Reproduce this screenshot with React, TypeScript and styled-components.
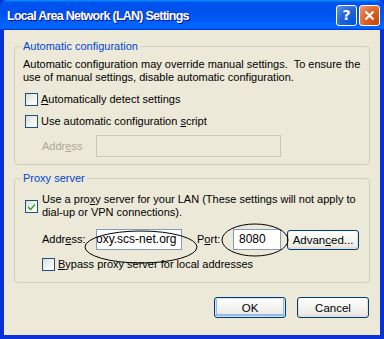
import React, { FC, ReactNode } from 'react'
import styled, { createGlobalStyle } from 'styled-components'

const GlobalStyle = createGlobalStyle`
    body {
        margin: 0px;
        background: #ffffff;
        font-family: "Liberation Sans", Arial, sans-serif;
        font-size: 11px;
    }
`

const Window = styled.div`
    width: 384px;
    height: 339px;
    display: flex;
    flex-direction: column;
    background: #0831d9;
    overflow: hidden;
    position: relative;
`

const TitleBar = styled.div`
    height: 30px;
    display: flex;
    align-items: center;
    padding: 0 4px 0 7px;
    border-radius: 7px 7px 0 0;
    background: linear-gradient(180deg, #0997ff 0%, #0053ee 8%, #0050ee 40%, #0066ff 88%, #0066ff 93%, #005bff 95%, #003dd7 96%, #003dd7 100%);
`

const Title = styled.div`
    flex: 1;
    color: #ffffff;
    font-family: "Liberation Sans", Arial, sans-serif;
    font-weight: bold;
    font-size: 12.5px;
    letter-spacing: -0.75px;
    text-shadow: 1px 1px #0f1089;
    margin-top: 1px;
`

const CaptionButton = styled.div<{ $close?: boolean }>`
    width: 19px;
    height: 19px;
    margin-left: 2px;
    border: 1px solid #ffffff;
    border-radius: 3px;
    display: flex;
    align-items: center;
    justify-content: center;
    color: #ffffff;
    font-family: "DejaVu Sans", sans-serif;
    font-weight: bold;
    font-size: 14px;
    background: ${p => p.$close
        ? 'radial-gradient(circle at 90% 90%, #cc4600 0%, #dc6527 55%, #f09b7c 100%)'
        : 'radial-gradient(circle at 90% 90%, #0054e9 0%, #2263d5 55%, #6696eb 100%)'};
`

const Body = styled.div`
    flex: 1;
    margin: 0 4px 4px 4px;
    background: #ece9d8;
    padding: 0 10px;
    display: flex;
    flex-direction: column;
    color: #000000;
`

const Group = styled.fieldset<{ $top: number }>`
    margin: ${p => p.$top}px 0 0 0;
    padding: 0 8px 7px 8px;
    border: 1px solid #d0d0bf;
    border-radius: 4px;
    display: flex;
    flex-direction: column;
    min-width: 0;
`

const Legend = styled.legend`
    color: #0046d5;
    padding: 0 2px;
    margin-left: -2px;
    line-height: 13px;
`

const Desc = styled.div`
    margin-top: 5px;
    line-height: 13px;
`

const Row = styled.div<{ $h?: number; $indent?: number; $mt?: number }>`
    display: flex;
    align-items: center;
    height: ${p => p.$h ?? 22}px;
    margin-left: ${p => p.$indent ?? 2}px;
    margin-top: ${p => p.$mt ?? 0}px;
`

const Box = styled.div`
    width: 11px;
    height: 11px;
    border: 1px solid #1c5180;
    background: linear-gradient(135deg, #dcdcd7 0%, #f5f5f1 60%, #ffffff 100%);
    flex: none;
    display: flex;
    align-items: center;
    justify-content: center;
`

const CheckLabel = styled.div<{ $gap?: number }>`
    margin-left: ${p => p.$gap ?? 3}px;
    line-height: 13px;
`

const Label = styled.div<{ $disabled?: boolean; $w: number }>`
    width: ${p => p.$w}px;
    flex: none;
    color: ${p => (p.$disabled ? '#aca899' : '#000000')};
`

const TextBox = styled.div<{ $disabled?: boolean; $w: number; $h: number }>`
    width: ${p => p.$w}px;
    height: ${p => p.$h}px;
    box-sizing: border-box;
    border: 1px solid ${p => (p.$disabled ? '#c9c7ba' : '#7f9db9')};
    background: ${p => (p.$disabled ? '#ece9d8' : '#ffffff')};
    display: flex;
    align-items: center;
    padding-left: 5px;
    overflow: hidden;
    white-space: nowrap;
    flex: none;
`

const Scrolled = styled.span`
    margin-left: -6px;
    font-size: 12px;
`

const Value = styled.span`
    font-size: 12px;
`

const Button = styled.div<{ $default?: boolean; $w: number; $h: number }>`
    width: ${p => p.$w}px;
    height: ${p => p.$h}px;
    box-sizing: border-box;
    border: 1px solid #003c74;
    border-radius: 3px;
    background: linear-gradient(180deg, #ffffff 0%, #f6f6f2 40%, #ecebe6 85%, #d6d0c5 100%);
    box-shadow: ${p => (p.$default ? 'inset 0 0 0 1px #cee7ff, inset 0 -1px 0 2px #98b8ea' : 'inset 0 -1px 0 1px #e3e1d8')};
    display: flex;
    align-items: center;
    justify-content: center;
    flex: none;
    font-size: 11.5px;
`

const Footer = styled.div`
    display: flex;
    justify-content: flex-end;
    gap: 11px;
    margin-top: 14px;
    padding-right: 1px;
`

const Marks = styled.svg`
    position: absolute;
    left: 0;
    top: 0;
    pointer-events: none;
`

const Check: FC<{ checked?: boolean }> = ({ checked }) => (
    <Box>
        {checked && (
            <svg width="9" height="9" viewBox="0 0 9 9">
                <path d="M1 4 L3.5 6.5 L8 1.5 L8 3.5 L3.5 8.5 L1 6 Z" fill="#21a121" />
            </svg>
        )}
    </Box>
)

const U: FC<{ children: ReactNode }> = ({ children }) => <u>{children}</u>

const App: FC = () => {
    return (
        <Window>
            <GlobalStyle />
            <TitleBar>
                <Title>Local Area Network (LAN) Settings</Title>
                <CaptionButton>?</CaptionButton>
                <CaptionButton $close>
                    <svg width="11" height="11" viewBox="0 0 11 11">
                        <path d="M1.5 1.5 L9.5 9.5 M9.5 1.5 L1.5 9.5" stroke="#ffffff" strokeWidth="2.2" />
                    </svg>
                </CaptionButton>
            </TitleBar>
            <Body>
                <Group $top={10}>
                    <Legend>Automatic configuration</Legend>
                    <Desc>
                        Automatic configuration may override manual settings.&nbsp; To ensure the
                        <br />
                        use of manual settings, disable automatic configuration.
                    </Desc>
                    <Row $mt={4}>
                        <Check />
                        <CheckLabel><U>A</U>utomatically detect settings</CheckLabel>
                    </Row>
                    <Row>
                        <Check />
                        <CheckLabel>Use automatic configuration <U>s</U>cript</CheckLabel>
                    </Row>
                    <Row $h={22} $indent={19} $mt={3}>
                        <Label $disabled $w={54}>Addr<U>e</U>ss</Label>
                        <TextBox $disabled $w={185} $h={22} />
                    </Row>
                </Group>
                <Group $top={7}>
                    <Legend>Proxy server</Legend>
                    <Row $h={26} $mt={8}>
                        <Check checked />
                        <CheckLabel $gap={4}>
                            Use a pro<U>x</U>y server for your LAN (These settings will not apply to
                            <br />
                            dial-up or VPN connections).
                        </CheckLabel>
                    </Row>
                    <Row $h={22} $indent={19} $mt={9}>
                        <Label $w={54}>Addr<U>e</U>ss:</Label>
                        <TextBox $w={86} $h={21}>
                            <Scrolled>oxy.scs-net.org</Scrolled>
                        </TextBox>
                        <Label $w={36} style={{ marginLeft: 15 }}>P<U>o</U>rt:</Label>
                        <TextBox $w={48} $h={21}>
                            <Value>8080</Value>
                        </TextBox>
                        <Button $w={72} $h={20} style={{ marginLeft: 6, marginTop: 2 }}>
                            Advan<U>c</U>ed...
                        </Button>
                    </Row>
                    <Row $h={22} $indent={19} $mt={3}>
                        <Check />
                        <CheckLabel $gap={3}><U>B</U>ypass proxy server for local addresses</CheckLabel>
                    </Row>
                </Group>
                <Footer>
                    <Button $default $w={72} $h={21}>OK</Button>
                    <Button $w={72} $h={21}>Cancel</Button>
                </Footer>
            </Body>
            <Marks width="384" height="339">
                <ellipse cx="141" cy="247" rx="56" ry="16" fill="none" stroke="#000000" strokeWidth="1" />
                <ellipse cx="255" cy="240" rx="33" ry="16" fill="none" stroke="#000000" strokeWidth="1" />
            </Marks>
        </Window>
    )
}

export default App
